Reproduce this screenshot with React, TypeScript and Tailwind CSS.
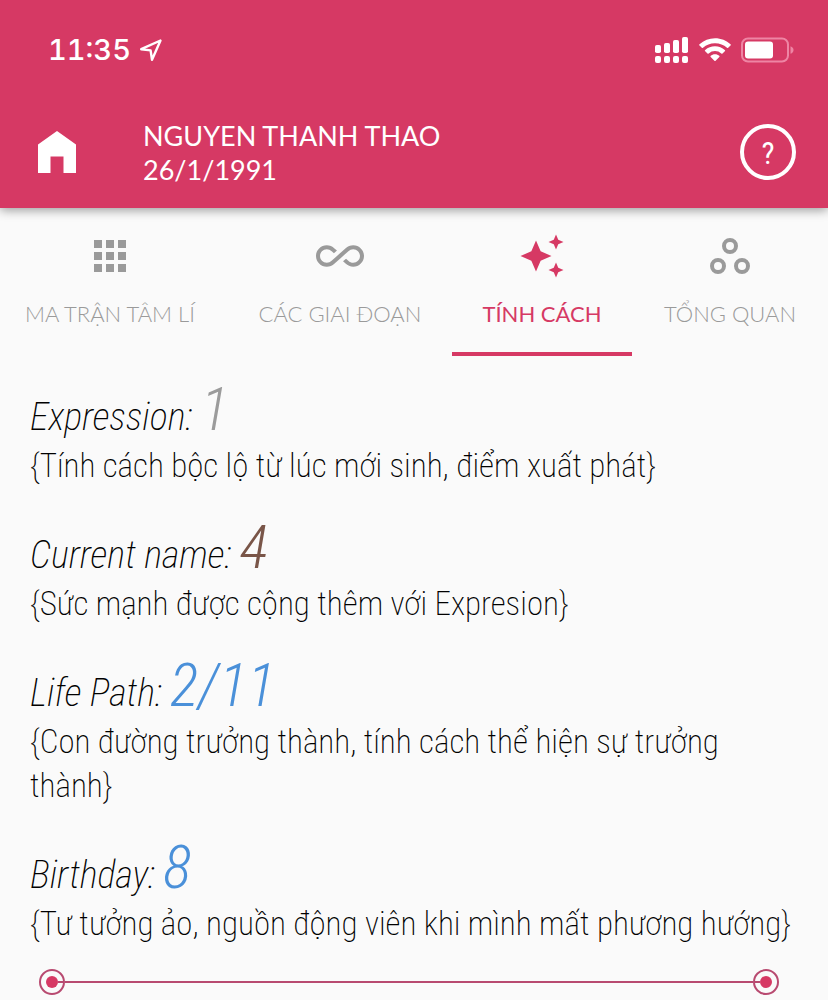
import type { ReactNode } from "react";

type Trait = { label: string; value: string; color: string; text: string };

const traits: Trait[] = [
  { label: "Expression:", value: "1", color: "text-[#9b9b9b]", text: "{Tính cách bộc lộ từ lúc mới sinh, điểm xuất phát}" },
  { label: "Current name:", value: "4", color: "text-[#795548]", text: "{Sức mạnh được cộng thêm với Expresion}" },
  { label: "Life Path:", value: "2/11", color: "text-[#4a90d9]", text: "{Con đường trưởng thành, tính cách thể hiện sự trưởng thành}" },
  { label: "Birthday:", value: "8", color: "text-[#4a90d9]", text: "{Tư tưởng ảo, nguồn động viên khi mình mất phương hướng}" },
];

function StatusBar() {
  return (
    <div className="flex h-24 items-center justify-between pt-1 pr-[34px] pl-12">
      <div className="flex items-center gap-2 font-[Inter,sans-serif] text-[29px] leading-10 font-medium tabular-nums">
        <span>11:35</span>
        <svg className="size-6" viewBox="0 0 24 24" fill="none" stroke="currentColor" strokeWidth="2.4" strokeLinejoin="round" aria-hidden="true">
          <path d="M21.500 2.500 2.200 11.200l9.400 1.200 1.400 9.400z" />
        </svg>
      </div>
      <div className="flex items-center gap-2.5" aria-hidden="true">
        <svg className="h-7 w-[34px]" viewBox="0 0 34 28" fill="currentColor">
          <rect x="0" y="9" width="6" height="8" rx="1.8" />
          <rect x="9" y="7" width="6" height="10" rx="1.8" />
          <rect x="18" y="4" width="6" height="13" rx="1.8" />
          <rect x="27" y="1" width="6" height="16" rx="1.8" />
          <rect x="0" y="20" width="6" height="7" rx="2" />
          <rect x="9" y="20" width="6" height="7" rx="2" />
          <rect x="18" y="20" width="6" height="7" rx="2" />
          <rect x="27" y="20" width="6" height="7" rx="2" />
        </svg>
        <svg className="h-6 w-8" viewBox="0 0 32 24" fill="currentColor">
          <path d="M16 .3c6 0 11.400 2.300 15.500 6a.8.8 0 0 1 0 1.200l-2.300 2.300a.9.9 0 0 1-1.200 0A17.500 17.500 0 0 0 16 5.200 17.500 17.500 0 0 0 4 9.800a.9.9 0 0 1-1.200 0L.5 7.500a.8.8 0 0 1 0-1.200A23 23 0 0 1 16 .3z" />
          <path d="M16 8.300c3.800 0 7.200 1.400 9.800 3.700a.8.8 0 0 1 0 1.300l-2.300 2.200a.9.9 0 0 1-1.200 0A9.600 9.600 0 0 0 16 13.100a9.600 9.600 0 0 0-6.300 2.400.9.9 0 0 1-1.200 0l-2.300-2.200a.8.8 0 0 1 0-1.300A14.700 14.700 0 0 1 16 8.300z" />
          <path d="M16 16.200c1.700 0 3.200.6 4.300 1.500.4.400.4.900 0 1.300l-3.700 3.700a.9.9 0 0 1-1.200 0L11.700 19c-.4-.4-.4-.9 0-1.300 1.100-.9 2.600-1.500 4.300-1.500z" />
        </svg>
        <svg className="h-[26px] w-[53px]" viewBox="0 0 53 26">
          <rect x="1" y="1.500" width="46" height="23" rx="6" fill="none" stroke="#ee85a4" strokeWidth="2" />
          <rect x="4" y="4.500" width="28" height="17" rx="3" fill="#fff" />
          <path d="M49.500 9.200c2 .7 3 2 3 3.800s-1 3.100-3 3.800z" fill="#ee85a4" />
        </svg>
      </div>
    </div>
  );
}

function Tab({ label, active = false, className = "", children }: { label: string; active?: boolean; className?: string; children: ReactNode }) {
  return (
    <button
      type="button"
      role="tab"
      aria-selected={active}
      className={`flex flex-col items-center border-b-4 pt-6 whitespace-nowrap ${active ? "border-[#d63964] text-[#d63964]" : "border-transparent text-[#9a9a9a]"} ${className}`}
    >
      <svg className="size-12" viewBox="0 0 48 48" fill="none" aria-hidden="true">{children}</svg>
      <span className="mt-6 mb-7 text-[22px] leading-5">{label}</span>
    </button>
  );
}

function Sparkle({ cx, cy, r }: { cx: number; cy: number; r: number }) {
  const k = r * 0.3;
  return (
    <path
      fill="currentColor"
      d={`M${cx} ${cy - r}L${cx + k} ${cy - k}L${cx + r} ${cy}L${cx + k} ${cy + k}L${cx} ${cy + r}L${cx - k} ${cy + k}L${cx - r} ${cy}L${cx - k} ${cy - k}Z`}
    />
  );
}

function EndPoint({ side }: { side: "left" | "right" }) {
  return (
    <span className={`flex size-[26px] items-center rounded-full border-2 border-[#b84a70] ${side === "left" ? "justify-end" : "justify-start"}`}>
      {side === "right" && <span className="h-0.5 w-[5px] bg-[#b84a70]" />}
      <span className="size-3 rounded-full bg-[#d63964]" />
      {side === "left" && <span className="h-0.5 w-[5px] bg-[#b84a70]" />}
    </span>
  );
}

export default function App() {
  return (
    <div className="min-h-screen bg-[#fafafa] font-[Lato,sans-serif]">
      <header className="relative h-52 bg-[#d63964] text-white shadow-[0_2px_10px_rgba(0,0,0,0.4)]">
        <StatusBar />
        <div className="flex h-28 items-center pr-8 pl-[38px]">
          <button type="button" aria-label="Home">
            <svg className="h-[42px] w-[38px]" viewBox="0 0 38 42" fill="currentColor" aria-hidden="true">
              <path d="M19 0 38 13.500V42H25.500V25.500h-13V42H0V13.500z" />
            </svg>
          </button>
          <h1 className="ml-[67px] flex-1 pt-0.5 text-[27px] leading-[34px]">
            NGUYEN THANH THAO
            <br />
            26/1/1991
          </h1>
          <button type="button" aria-label="Help" className="flex size-14 items-center justify-center rounded-full border-4 pt-1 font-[Roboto_Condensed,Roboto,sans-serif] text-[31px] leading-8">
            ?
          </button>
        </div>
      </header>
      <div role="tablist" className="grid grid-cols-[228fr_224fr_180fr_196fr] font-light">
        <Tab label="MA TRẬN TÂM LÍ" className="pr-2">
          <path fill="currentColor" d="M8 8h8v8H8zM20 8h8v8h-8zM32 8h8v8h-8zM8 20h8v8H8zM20 20h8v8h-8zM32 20h8v8h-8zM8 32h8v8H8zM20 32h8v8h-8zM32 32h8v8h-8z" />
        </Tab>
        <Tab label="CÁC GIAI ĐOẠN">
          <path
            fill="currentColor"
            transform="scale(2)"
            d="M18.600 6.620c-1.440 0-2.800.56-3.770 1.530L12 10.660 10.480 12h.01L7.800 14.390c-.64.64-1.490.99-2.400.99-1.870 0-3.390-1.510-3.390-3.380S3.530 8.620 5.400 8.620c.91 0 1.760.35 2.440 1.030l1.130 1 1.510-1.340L9.220 8.200C8.200 7.180 6.840 6.620 5.400 6.620 2.420 6.620 0 9.040 0 12s2.420 5.380 5.400 5.380c1.440 0 2.800-.56 3.770-1.530l2.830-2.500.01.01L13.520 12h-.01l2.690-2.390c.64-.64 1.490-.99 2.400-.99 1.870 0 3.390 1.510 3.390 3.380s-1.520 3.380-3.390 3.380c-.9 0-1.760-.35-2.440-1.030l-1.140-1.010-1.510 1.340 1.270 1.120c1.020 1.010 2.370 1.570 3.820 1.570 2.980 0 5.400-2.410 5.400-5.380s-2.420-5.370-5.400-5.370z"
          />
        </Tab>
        <Tab label="TÍNH CÁCH" active className="font-normal">
          <Sparkle cx={18} cy={24} r={15.5} />
          <Sparkle cx={38} cy={10} r={7.5} />
          <Sparkle cx={38} cy={38} r={7.5} />
        </Tab>
        <Tab label="TỔNG QUAN">
          <g stroke="currentColor" strokeWidth="4">
            <circle cx="24" cy="14" r="6" />
            <circle cx="12" cy="34" r="6" />
            <circle cx="36" cy="34" r="6" />
          </g>
        </Tab>
      </div>
      <main className="px-[30px] pt-6 font-[Roboto_Condensed,Roboto,sans-serif] font-extralight text-black">
        <div className="flex flex-col gap-[30px]">
          {traits.map((t) => (
            <section key={t.label}>
              <h2 className="mb-1 flex h-[60px] items-baseline gap-2 text-[38px] leading-[60px] italic">
                {t.label}
                <span className={`text-[60px] font-light ${t.color}`}>{t.value}</span>
              </h2>
              <p className="text-[33px] leading-[44px]">{t.text}</p>
            </section>
          ))}
        </div>
        <div className="mt-[23px] mr-[19px] ml-[9px] flex items-center" aria-hidden="true">
          <EndPoint side="left" />
          <span className="h-0.5 flex-1 bg-[#b84a70]" />
          <EndPoint side="right" />
        </div>
      </main>
    </div>
  );
}
